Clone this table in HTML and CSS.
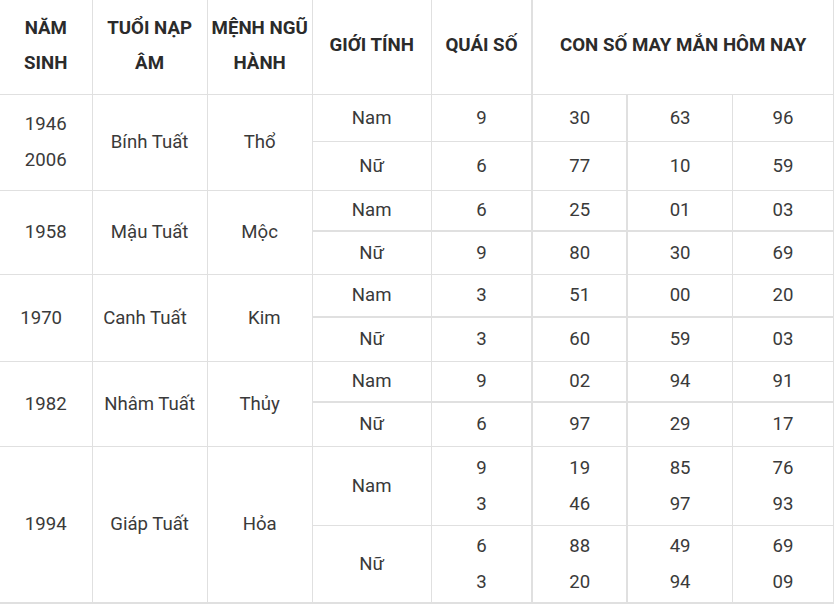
FILE: index.html
```html
<!DOCTYPE html>
<html lang="vi">
<head>
<meta charset="utf-8">
<title>Con số may mắn</title>
<link rel="stylesheet" href="styles.css">
</head>
<body>
<table class="lucky">
  <colgroup>
    <col class="c1"><col class="c2"><col class="c3"><col class="c4"><col class="c5"><col class="c6"><col class="c7"><col class="c8">
  </colgroup>
  <thead>
    <tr>
      <th class="first">NĂM<br>SINH</th>
      <th>TUỔI NẠP<br>ÂM</th>
      <th>MỆNH NGŨ<br>HÀNH</th>
      <th>GIỚI TÍNH</th>
      <th class="qs">QUÁI SỐ</th>
      <th colspan="3" class="lucky-head">CON SỐ MAY MẮN HÔM NAY</th>
    </tr>
  </thead>
  <tbody>
    <tr class="r1a">
      <td rowspan="2" class="first">1946<br>2006</td>
      <td rowspan="2">Bính Tuất</td>
      <td rowspan="2">Thổ</td>
      <td>Nam</td><td class="qs">9</td><td class="n1">30</td><td class="n2">63</td><td>96</td>
    </tr>
    <tr class="r1b">
      <td>Nữ</td><td class="qs">6</td><td class="n1">77</td><td class="n2">10</td><td>59</td>
    </tr>

    <tr class="r2a">
      <td rowspan="2" class="first">1958</td>
      <td rowspan="2">Mậu Tuất</td>
      <td rowspan="2">Mộc</td>
      <td class="sub">Nam</td><td class="qs sub">6</td><td class="n1 sub">25</td><td class="n2 sub">01</td><td class="sub">03</td>
    </tr>
    <tr class="r2b">
      <td>Nữ</td><td class="qs">9</td><td class="n1">80</td><td class="n2">30</td><td>69</td>
    </tr>

    <tr class="r3a">
      <td rowspan="2" class="first">1970&nbsp;&nbsp;</td>
      <td rowspan="2">Canh Tuất&nbsp;&nbsp;</td>
      <td rowspan="2">&nbsp;&nbsp;Kim</td>
      <td class="sub">Nam</td><td class="qs sub">3</td><td class="n1 sub">51</td><td class="n2 sub">00</td><td class="sub">20</td>
    </tr>
    <tr class="r3b">
      <td>Nữ</td><td class="qs">3</td><td class="n1">60</td><td class="n2">59</td><td>03</td>
    </tr>

    <tr class="r4a">
      <td rowspan="2" class="first">1982</td>
      <td rowspan="2">Nhâm Tuất</td>
      <td rowspan="2">Thủy</td>
      <td class="sub">Nam</td><td class="qs sub">9</td><td class="n1 sub">02</td><td class="n2 sub">94</td><td class="sub">91</td>
    </tr>
    <tr class="r4b">
      <td>Nữ</td><td class="qs">6</td><td class="n1">97</td><td class="n2">29</td><td>17</td>
    </tr>

    <tr class="r5a">
      <td rowspan="2" class="first last">1994</td>
      <td rowspan="2" class="last">Giáp Tuất</td>
      <td rowspan="2" class="last">Hỏa</td>
      <td>Nam</td><td class="qs">9<br>3</td><td class="n1">19<br>46</td><td class="n2">85<br>97</td><td>76<br>93</td>
    </tr>
    <tr class="r5b">
      <td class="last">Nữ</td><td class="qs last">6<br>3</td><td class="n1 last">88<br>20</td><td class="n2 last">49<br>94</td><td class="last">69<br>09</td>
    </tr>
  </tbody>
</table>
</body>
</html>
```

FILE: styles.css
```css
html, body {
  margin: 0;
  padding: 0;
  background: #ffffff;
}

.lucky {
  border-collapse: collapse;
  table-layout: fixed;
  width: 834px;
  font-family: Roboto, "Liberation Sans", Arial, sans-serif;
  font-size: 18.6px;
  line-height: 36px;
  color: #3a3a3a;
  text-align: center;
}

.c1 { width: 92px; }
.c2 { width: 115px; }
.c3 { width: 105px; }
.c4 { width: 119px; }
.c5 { width: 101px; }
.c6 { width: 95px; }
.c7 { width: 105px; }
.c8 { width: 101px; }

.lucky th,
.lucky td {
  border: 1px solid #e0e0e0;
  padding: 0 2px;
  vertical-align: middle;
  white-space: nowrap;
  box-sizing: border-box;
}

.lucky th {
  border-top: none;
  font-weight: 700;
  font-size: 18.7px;
  line-height: 35px;
  color: #2b2b2b;
  height: 94px;
  padding-bottom: 2px;
}

.lucky .first {
  border-left: none;
}

/* thicker grid lines as seen in the reference */
.lucky .qs { border-right-width: 2px; }
.lucky .n1 { border-right-width: 2px; }
.lucky .sub { border-bottom-width: 2px; }
.lucky .last { border-bottom-width: 2px; }

.r1a td { height: 47px; }
.r1b td { height: 49px; }
.r2a td { height: 41px; }
.r2b td { height: 43px; }
.r3a td { height: 43px; }
.r3b td { height: 44px; }
.r4a td { height: 41px; }
.r4b td { height: 44px; }
.r5a td { height: 79px; }
.r5b td { height: 78px; }
.lucky td[rowspan] { height: auto; }
```
